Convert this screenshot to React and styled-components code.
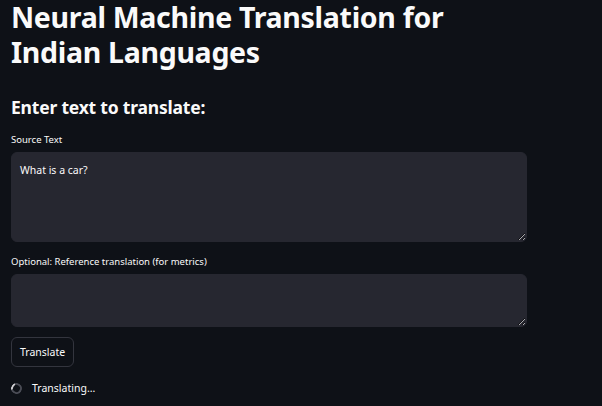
import styled, { createGlobalStyle } from "styled-components";

const GlobalStyle = createGlobalStyle`
  html, body {
    margin: 0;
    padding: 0;
    background: #0e1117;
  }
  body {
    font-family: "Noto Sans", "Open Sans", sans-serif;
    color: #fafafa;
  }
`;

const App = () => {
  return (
    <>
      <GlobalStyle />
      <Page>
        <Title>Neural Machine Translation for Indian Languages</Title>
        <Subtitle>Enter text to translate:</Subtitle>
        <Field>
          <Label>Source Text</Label>
          <TextBox height={90} defaultValue="What is a car?" />
        </Field>
        <Field>
          <Label>Optional: Reference translation (for metrics)</Label>
          <TextBox height={53} defaultValue="" />
        </Field>
        <Button>Translate</Button>
        <Status>
          <Spinner />
          <span>Translating...</span>
        </Status>
      </Page>
    </>
  );
};

const Page = styled.div`
  width: 516px;
  padding: 0 11px;
  display: flex;
  flex-direction: column;
  align-items: flex-start;
  height: 406px;
  overflow: hidden;
`;

const Title = styled.h1`
  margin: 0;
  font-size: 28.5px;
  line-height: 35px;
  font-weight: 700;
  letter-spacing: -0.3px;
  color: #fafafa;
  width: 470px;
`;

const Subtitle = styled.h2`
  margin: 25px 0 0;
  font-size: 17.5px;
  line-height: 24px;
  font-weight: 700;
  letter-spacing: -0.2px;
`;

const Field = styled.div`
  display: flex;
  flex-direction: column;
  gap: 6px;
  width: 100%;
  margin-top: 15px;
  & + & {
    margin-top: 14px;
  }
`;

const Label = styled.label`
  font-size: 9.5px;
  line-height: 12px;
  color: #fafafa;
`;

const TextBox = styled.textarea`
  box-sizing: border-box;
  width: 100%;
  height: ${(p) => p.height}px;
  background: #262730;
  border: 1px solid #262730;
  border-radius: 6px;
  padding: 10px 8px 8px;
  font-family: "Noto Sans", sans-serif;
  font-size: 10.5px;
  line-height: 14px;
  color: #fafafa;
  resize: vertical;
  outline: none;
`;

const Button = styled.button`
  margin-top: 10px;
  height: 30px;
  padding: 0 8px;
  background: #0e1117;
  border: 1px solid #33353e;
  border-radius: 6px;
  color: #fafafa;
  font-family: "Noto Sans", sans-serif;
  font-size: 10.5px;
`;

const Status = styled.div`
  margin-top: 14px;
  display: flex;
  align-items: center;
  gap: 10px;
  font-size: 10.5px;
  color: #fafafa;
`;

const Spinner = styled.div`
  box-sizing: border-box;
  width: 11px;
  height: 11px;
  border-radius: 50%;
  border: 2px solid #4a4c55;
  border-top-color: #d0d0d4;
  transform: rotate(-60deg);
`;

export default App;
